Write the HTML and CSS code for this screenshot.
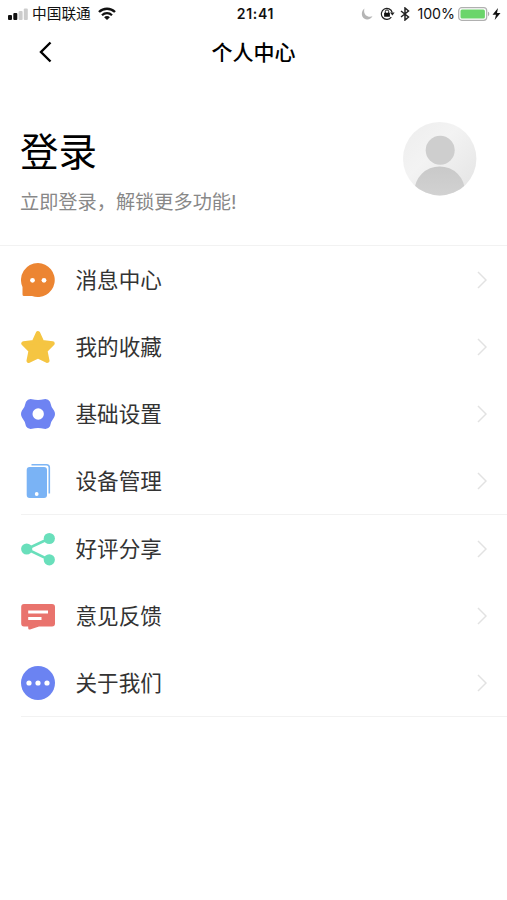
FILE: index.html
```
<!DOCTYPE html>
<html lang="zh-CN">
<head>
    <meta charset="UTF-8">
    <meta name="viewport" content="width=device-width, initial-scale=1.0">
    <title>个人中心</title>
    <link rel="stylesheet" href="styles.css">
</head>
<body>
    <!-- Status Bar -->
    <div class="status-bar">
        <div class="status-left">
            <svg class="signal" width="20" height="12" viewBox="0 0 20 12">
                <rect x="0" y="7" width="4" height="5" rx="1" fill="#111"/>
                <rect x="5.3" y="5" width="4" height="7" rx="1" fill="#111"/>
                <rect x="10.6" y="3" width="4" height="9" rx="1" fill="#ccc"/>
                <rect x="15.8" y="0.5" width="4" height="11.5" rx="1" fill="#ccc"/>
            </svg>
            <span class="carrier">中国联通</span>
            <svg class="wifi" width="18" height="14" viewBox="0 0 18 14">
                <path d="M1 5C5.5 .6 12.5 .6 17 5" fill="none" stroke="#111" stroke-width="2.4"/>
                <path d="M4 8.2C6.8 5.4 11.2 5.4 14 8.2" fill="none" stroke="#111" stroke-width="2.2"/>
                <path d="M9 13L6.1 10.2C7.7 8.7 10.3 8.7 11.9 10.2Z" fill="#111"/>
            </svg>
        </div>
        <div class="status-time">21:41</div>
        <div class="status-right">
            <svg class="moon" width="12" height="12" viewBox="0 0 12 12">
                <path d="M3.5 .5C-.5 3-.2 11 6 11.4C8.5 11.5 10.4 10.3 11.5 8.3C6 10 1.8 6 3.5 .5Z" fill="#b5b5b5"/>
            </svg>
            <svg class="lock" width="15" height="13" viewBox="0 0 15 13">
                <path d="M11.3 10.2A5.5 5.5 0 1 1 12.2 5.5" fill="none" stroke="#222" stroke-width="1.2"/>
                <path d="M10 5.5H14.6L12.4 8.4Z" fill="#222"/>
                <rect x="4.1" y="5.7" width="5.8" height="4" rx=".5" fill="#111"/>
                <path d="M5.3 6V4.6A1.7 1.7 0 0 1 8.7 4.6V6" fill="none" stroke="#111"/>
            </svg>
            <svg class="bluetooth" width="10" height="14" viewBox="0 0 10 14">
                <path d="M1 4L8.5 10L5 13V1L8.5 4L1 10" fill="none" stroke="#222" stroke-width="1.5"/>
            </svg>
            <span class="percent">100%</span>
            <svg class="battery" width="32" height="14" viewBox="0 0 32 14">
                <rect x=".7" y=".7" width="28" height="12.6" rx="3" fill="#fff" stroke="#b0b0b0" stroke-width="1.2"/>
                <rect x="2.5" y="2.5" width="24.4" height="9" rx="1.5" fill="#6bd56b"/>
                <path d="M30 4.8C31.7 5.4 31.7 8.6 30 9.2Z" fill="#aaa"/>
            </svg>
            <svg class="bolt" width="9" height="12" viewBox="0 0 9 12">
                <path d="M6 0L.5 6.7H4L2.7 12L8.5 5H5Z" fill="#111"/>
            </svg>
        </div>
    </div>

    <!-- Nav Bar -->
    <div class="nav-bar">
        <svg class="back" width="14" height="22" viewBox="0 0 14 22">
            <path d="M12.5 1.5L3 11L12.5 20.5" fill="none" stroke="#000" stroke-width="2.4"/>
        </svg>
        <h1>个人中心</h1>
    </div>

    <!-- Login Section -->
    <div class="login-section">
        <div class="login-text">
            <h2>登录</h2>
            <p>立即登录，解锁更多功能!</p>
        </div>
        <svg class="avatar" width="74" height="74" viewBox="0 0 74 74">
            <defs>
                <linearGradient id="avatar-bg" x1="0" y1="0" x2="1" y2="1">
                    <stop offset="0" stop-color="#ededed"/>
                    <stop offset=".4" stop-color="#f3f3f3"/>
                    <stop offset="1" stop-color="#e3e3e3"/>
                </linearGradient>
                <linearGradient id="avatar-body" x1="0" y1="0" x2="0" y2="1">
                    <stop offset="0" stop-color="#c9c9c9"/>
                    <stop offset="1" stop-color="#d8d8d8"/>
                </linearGradient>
                <clipPath id="avatar-clip"><circle cx="36.7" cy="36.7" r="36.7"/></clipPath>
            </defs>
            <g clip-path="url(#avatar-clip)">
                <rect width="74" height="74" fill="url(#avatar-bg)"/>
                <circle cx="37.2" cy="28.2" r="14.5" fill="#cecece"/>
                <circle cx="36.7" cy="69.7" r="25.3" fill="url(#avatar-body)"/>
            </g>
        </svg>
    </div>

    <!-- Menu -->
    <ul class="menu">
        <li class="menu-item">
            <svg class="icon" viewBox="0 0 34 34">
                <path d="M17 0A17 17 0 1 1 11 33H3Q1.5 33 1.5 31.5V24A17 17 0 0 1 17 0Z" fill="#ec8532"/>
                <circle cx="11.5" cy="17.3" r="2.4" fill="#fff"/>
                <circle cx="23" cy="17.3" r="2.4" fill="#fff"/>
            </svg>
            <span class="label">消息中心</span>
            <svg class="arrow" viewBox="0 0 10 18"><path d="M1 1L9 9L1 17"/></svg>
        </li>
        <li class="menu-item">
            <svg class="icon" viewBox="0 0 34 34">
                <path d="M17 3.2L21.2 12.3L31.5 13.5L24.3 20.8L26.3 30.7L17 26.2L7.7 30.7L9.7 20.8L2.5 13.5L12.8 12.3Z" fill="#f5c542" stroke="#f5c542" stroke-width="4.4" stroke-linejoin="round"/>
            </svg>
            <span class="label">我的收藏</span>
            <svg class="arrow" viewBox="0 0 10 18"><path d="M1 1L9 9L1 17"/></svg>
        </li>
        <li class="menu-item">
            <svg class="icon" viewBox="0 0 34 34">
                <path d="M11 2.2Q17 3.8 23 2.2Q27 1.4 29 4.8Q30 10 33 13.6Q35 17 33 20.4Q30 24 29 29.2Q27 32.6 23 31.8Q17 30.2 11 31.8Q7 32.6 5 29.2Q4 24 1 20.4Q-1 17 1 13.6Q4 10 5 4.8Q7 1.4 11 2.2Z" fill="#6e83f2"/>
                <circle cx="17.2" cy="17" r="5.7" fill="#fff"/>
            </svg>
            <span class="label">基础设置</span>
            <svg class="arrow" viewBox="0 0 10 18"><path d="M1 1L9 9L1 17"/></svg>
        </li>
        <li class="menu-item">
            <svg class="icon" viewBox="0 0 34 34">
                <path d="M10.5 .8H25.5Q28.3 .8 28.3 3.6V29.5" fill="none" stroke="#7db5f5" stroke-width="1.6"/>
                <rect x="5.7" y="3" width="20.3" height="31" rx="3" fill="#7ab3f5"/>
                <circle cx="15.7" cy="30" r="1.9" fill="#fff"/>
            </svg>
            <span class="label">设备管理</span>
            <svg class="arrow" viewBox="0 0 10 18"><path d="M1 1L9 9L1 17"/></svg>
        </li>
    </ul>
    <ul class="menu">
        <li class="menu-item">
            <svg class="icon" viewBox="0 0 34 34">
                <path d="M28.3 6.5L5.7 17L28.3 27.8" fill="none" stroke="#69dfbb" stroke-width="2.6"/>
                <circle cx="28.3" cy="6.5" r="5.6" fill="#69dfbb"/>
                <circle cx="5.7" cy="17" r="5.6" fill="#69dfbb"/>
                <circle cx="28.3" cy="27.8" r="5.6" fill="#69dfbb"/>
            </svg>
            <span class="label">好评分享</span>
            <svg class="arrow" viewBox="0 0 10 18"><path d="M1 1L9 9L1 17"/></svg>
        </li>
        <li class="menu-item">
            <svg class="icon" viewBox="0 0 34 34">
                <path d="M3 5H31Q34 5 34 8V24.5Q34 27.5 31 27.5H18L9 30.5Q7.2 31 7.2 29V27.5H3Q.2 27.5 .2 24.5V8Q.2 5 3 5Z" fill="#e9736d"/>
                <path d="M7.2 13H27M7.2 19.5H20.5" stroke="#fff" stroke-width="2.8"/>
            </svg>
            <span class="label">意见反馈</span>
            <svg class="arrow" viewBox="0 0 10 18"><path d="M1 1L9 9L1 17"/></svg>
        </li>
        <li class="menu-item">
            <svg class="icon" viewBox="0 0 34 34">
                <circle cx="17" cy="17" r="17" fill="#6b83f2"/>
                <circle cx="8" cy="17" r="2.6" fill="#fff"/>
                <circle cx="17" cy="17" r="2.6" fill="#fff"/>
                <circle cx="26" cy="17" r="2.6" fill="#fff"/>
            </svg>
            <span class="label">关于我们</span>
            <svg class="arrow" viewBox="0 0 10 18"><path d="M1 1L9 9L1 17"/></svg>
        </li>
    </ul>
</body>
</html>
```
FILE: styles.css
```
* {
    box-sizing: border-box;
}

body {
    margin: 0;
    background-color: #fff;
    font-family: Inter, "Noto Sans CJK SC", sans-serif;
    color: #333;
}

svg {
    display: block;
    flex-shrink: 0;
}

/* Status bar */
.status-bar {
    display: grid;
    grid-template-columns: 1fr auto 1fr;
    align-items: center;
    height: 27px;
    padding: 0 6px 0 8px;
    color: #111;
}

.status-left, .status-right {
    display: flex;
    align-items: center;
}

.status-right {
    justify-content: flex-end;
}

.carrier {
    margin: 0 7px 0 4px;
    font-size: 14.7px;
    line-height: 20px;
}

.status-time {
    padding-left: 2px;
    font-size: 14px;
    font-weight: 600;
    letter-spacing: 0.7px;
}

.lock {
    margin-left: 7px;
}

.bluetooth {
    margin-left: 5px;
}

.percent {
    margin: 0 3px 0 7px;
    font-size: 14.2px;
}

.bolt {
    margin-left: 2px;
}

/* Nav bar */
.nav-bar {
    display: grid;
    grid-template-columns: 1fr auto 1fr;
    align-items: center;
    height: 50px;
    padding: 0 38px;
}

h1 {
    margin: 1px 0 0;
    font-size: 21px;
    font-weight: 500;
    line-height: 30px;
    color: #000;
}

/* Login header */
.login-section {
    display: flex;
    justify-content: space-between;
    align-items: flex-start;
    height: 169px;
    padding: 45px 30px 0 20px;
    border-bottom: 1px solid #f2f2f2;
}

h2 {
    margin: 1px 0 0;
    font-size: 38.5px;
    font-weight: 400;
    line-height: 58px;
    color: #000;
}

.login-text p {
    margin: 7px 0 0;
    font-size: 19.2px;
    line-height: 28px;
    color: #888;
}

/* Menu list */
.menu {
    margin: 0 0 0 21px;
    padding: 0;
    list-style: none;
}

.menu-item {
    display: flex;
    align-items: center;
    height: 67.3px;
    padding-right: 20px;
}

.menu-item:last-child {
    border-bottom: 1px solid #f2f2f2;
}

.icon {
    width: 34px;
    height: 34px;
}

.label {
    flex: 1;
    margin-left: 20.5px;
    font-size: 21.6px;
    line-height: 32px;
}

.arrow {
    width: 10px;
    height: 18px;
    fill: none;
    stroke: #e2e2e2;
    stroke-width: 1.5;
}
```
